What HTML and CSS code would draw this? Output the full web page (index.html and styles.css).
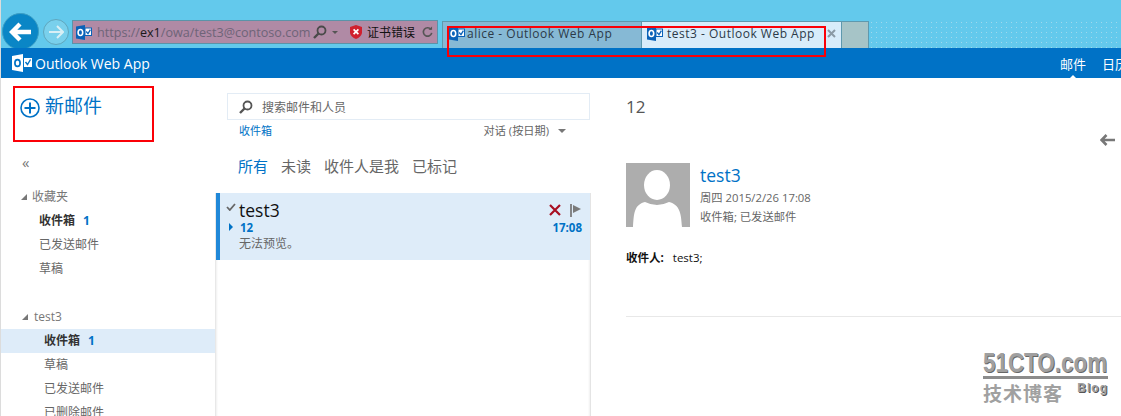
FILE: index.html
```html
<!DOCTYPE html>
<html lang="zh-CN">
<head>
<meta charset="utf-8">
<title>test3 - Outlook Web App</title>
<link rel="stylesheet" href="styles.css">
</head>
<body>
<svg class="defs" width="0" height="0" aria-hidden="true">
  <symbol id="ol" viewBox="0 0 16 15">
    <path d="M0 1.5 L9 0 V15 L0 13.5Z" fill="#0a62b8"/>
    <ellipse cx="4.4" cy="7.5" rx="2.3" ry="3" fill="none" stroke="#fff" stroke-width="1.6"/>
    <rect x="9" y="3" width="6.5" height="7.5" fill="#fff" stroke="#0a62b8"/>
    <path d="M10.2 6.5 L12 8.6 L14.4 4.6" fill="none" stroke="#0a62b8" stroke-width="1.3"/>
  </symbol>
  <symbol id="mag" viewBox="0 0 14 14">
    <circle cx="8.5" cy="5.5" r="4" fill="none" stroke="currentColor" stroke-width="1.8"/>
    <path d="M5.5 8.5 L1 13" stroke="currentColor" stroke-width="2.4"/>
  </symbol>
</svg>

<header class="chrome">
  <div class="nav-btns">
    <div class="back"><svg width="24" height="20" viewBox="0 0 24 20"><path d="M11 2 L3 10 L11 18 M3 10 H22" fill="none" stroke="#fff" stroke-width="4.4"/></svg></div>
    <div class="forward"><svg width="16" height="14" viewBox="0 0 16 14"><path d="M9 1 L15 7 L9 13 M15 7 H1" fill="none" stroke="#d8eff5" stroke-width="2"/></svg></div>
  </div>
  <div class="address">
    <svg class="ol-icon" width="16" height="15"><use href="#ol"/></svg>
    <span class="url">https://<b>ex1</b>/owa/test3@contoso.com</span>
    <svg class="addr-mag" width="14" height="14"><use href="#mag"/></svg>
    <span class="addr-caret"></span>
    <svg class="shield" width="12" height="14" viewBox="0 0 12 14"><path d="M6 0 L12 2 V8 Q11 12 6 14 Q1 12 0 8 V2Z" fill="#d01f2e"/><path d="M3.6 4.4 L8.4 9.2 M8.4 4.4 L3.6 9.2" stroke="#fff" stroke-width="1.7"/></svg>
    <span class="cert">证书错误</span>
    <svg class="reload" width="11" height="12" viewBox="0 0 12 12"><path d="M9.8 3.2 A4.6 4.6 0 1 0 10.6 7" fill="none" stroke="#555" stroke-width="1.8"/><path d="M7 3.6 H11 V0Z" fill="#555"/></svg>
  </div>
  <div class="tabs">
    <div class="tab tab-off"><svg width="16" height="15"><use href="#ol"/></svg><span>alice - Outlook Web App</span></div>
    <div class="tab tab-on"><svg width="16" height="15"><use href="#ol"/></svg><span>test3 - Outlook Web App</span><svg class="tab-x" width="9" height="9" viewBox="0 0 9 9"><path d="M1 1 L8 8 M8 1 L1 8" stroke="#8b9aa5" stroke-width="2"/></svg></div>
    <div class="tab-new"></div>
  </div>
  <div class="dots"></div>
</header>

<div class="suite">
  <div class="brand">
    <svg width="20" height="18" viewBox="0 0 20 18"><path d="M0 2 L11 0 V18 L0 16Z" fill="#fff"/><ellipse cx="5.5" cy="9" rx="2.6" ry="3.4" fill="none" stroke="#0072c6" stroke-width="1.7"/><rect x="12" y="4" width="8" height="9" fill="#fff"/><path d="M13.5 8 L15.5 10.5 L18.5 5.5" fill="none" stroke="#0072c6" stroke-width="1.4"/></svg>
    <span>Outlook Web App</span>
  </div>
  <nav class="suite-nav">
    <span class="suite-link current">邮件</span>
    <span class="suite-link">日历</span>
  </nav>
</div>

<main class="app">
  <aside class="left">
    <div class="new-mail">
      <svg width="20" height="20" viewBox="0 0 20 20"><circle cx="10" cy="10" r="9" fill="none" stroke="#0072c6" stroke-width="1.6"/><path d="M10 4.5 V15.5 M4.5 10 H15.5" stroke="#0072c6" stroke-width="2"/></svg>
      <span>新邮件</span>
    </div>
    <div class="collapse">«</div>
    <section class="group fav">
      <div class="group-head"><span class="tri"></span>收藏夹</div>
      <div class="item strong">收件箱<em>1</em></div>
      <div class="item">已发送邮件</div>
      <div class="item">草稿</div>
    </section>
    <section class="group acct">
      <div class="group-head"><span class="tri"></span>test3</div>
      <div class="item strong selected">收件箱<em>1</em></div>
      <div class="item">草稿</div>
      <div class="item">已发送邮件</div>
      <div class="item">已删除邮件</div>
    </section>
  </aside>

  <section class="list">
    <div class="search">
      <svg width="14" height="14"><use href="#mag"/></svg>
      <span>搜索邮件和人员</span>
    </div>
    <div class="list-meta">
      <span class="folder">收件箱</span>
      <span class="sort">对话 (按日期)<i class="sort-caret"></i></span>
    </div>
    <div class="filters">
      <span class="active">所有</span><span>未读</span><span>收件人是我</span><span>已标记</span>
    </div>
    <div class="messages">
      <article class="msg">
        <svg class="check" width="10" height="8" viewBox="0 0 10 8"><path d="M1 4 L3.8 7 L9 1" fill="none" stroke="#666" stroke-width="1.8"/></svg>
        <div class="msg-body">
          <div class="msg-row"><span class="sender">test3</span>
            <span class="msg-actions">
              <svg width="12" height="12" viewBox="0 0 12 12"><path d="M1 1 L11 11 M11 1 L1 11" stroke="#a80f22" stroke-width="2.2"/></svg>
              <svg width="11" height="13" viewBox="0 0 11 13"><path d="M1 0 V13" stroke="#7a7a7a" stroke-width="1.8"/><path d="M3 1 L11 5 L3 9Z" fill="#7a7a7a"/></svg>
            </span>
          </div>
          <div class="msg-row subject"><span class="subj"><i class="expand"></i>12</span><span>17:08</span></div>
          <div class="preview">无法预览。</div>
        </div>
      </article>
    </div>
  </section>

  <section class="read">
    <h1 class="subject-title">12</h1>
    <div class="reply-arrow"><svg width="15" height="12" viewBox="0 0 15 12"><path d="M6.5 1 L1.5 6 L6.5 11 M2 6 H15" fill="none" stroke="#777" stroke-width="2.6"/></svg></div>
    <div class="sender-card">
      <svg class="avatar" width="64" height="64" viewBox="0 0 64 64"><rect width="64" height="64" fill="#adadad"/><ellipse cx="31" cy="22" rx="13" ry="15" fill="#fff"/><path d="M7 64 C8 50 8 42 19 39 Q31 45 43 39 C54 42 55 50 56 64Z" fill="#fff"/></svg>
      <div class="sender-info">
        <div class="sender-name">test3</div>
        <div class="sender-line">周四 2015/2/26 17:08</div>
        <div class="sender-line">收件箱; 已发送邮件</div>
      </div>
    </div>
    <div class="recipients"><b>收件人:</b><span>test3;</span></div>
    <hr class="rule">
  </section>
</main>

<div class="callout callout-tabs"></div>
<div class="callout callout-new"></div>

<div class="watermark">
  <div class="wm-top"><span class="wm-logo">51CTO.com</span></div>
  <div class="wm-bottom"><span class="wm-cn">技术博客</span><span class="wm-blog">Blog</span></div>
</div>
</body>
</html>
```
FILE: styles.css
```css
* { box-sizing: border-box; }
html, body { margin: 0; padding: 0; }
body {
  width: 1121px; height: 416px; overflow: hidden; position: relative;
  background: #fff; color: #666;
  font-family: "Open Sans", "Noto Sans", "Noto Sans CJK SC", sans-serif;
  border-left: 1px solid #dcdcdc;
}
.defs { position: absolute; }

/* browser chrome */
.chrome {
  height: 48px; background: #63c9ec; display: flex; align-items: flex-end;
  margin-left: -1px; padding-left: 2px; overflow: hidden;
}
.nav-btns { display: flex; align-items: center; height: 37px; margin-bottom: -2px; }
.back {
  width: 37px; height: 37px; border-radius: 50%; background: #0a86c6; border: 1px solid #3a9dc4;
  display: flex; align-items: center; justify-content: center;
}
.forward {
  width: 26px; height: 26px; border-radius: 50%; border: 1px solid #5fa6bd; margin-left: 4px;
  background: #79d0ec; display: flex; align-items: center; justify-content: center;
}
.address {
  width: 366px; height: 24px; margin: 0 0 4px 3px; background: #b08aa5; border: 1px solid #5b93a8;
  display: flex; align-items: center; padding-left: 3px; font-size: 12.6px; color: #6e6478;
}
.ol-icon { flex: none; }
.url { margin-left: 5px; width: 213px; flex: none; white-space: nowrap; }
.url b { font-weight: 400; color: #1a1a1a; }
.addr-mag { color: #4a4a4a; margin-left: 3px; flex: none; }
.addr-caret { width: 0; height: 0; border: 3.5px solid transparent; border-top-color: #555; border-bottom: 0; margin-left: 5px; }
.shield { margin-left: 12px; flex: none; }
.cert { color: #111; font-size: 12px; margin-left: 5px; width: 49px; flex: none; white-space: nowrap; }
.reload { margin-left: 6px; flex: none; }

.tabs { display: flex; height: 27px; margin-left: 4px; }
.tab {
  width: 199px; display: flex; align-items: center; padding: 0 0 3px 6px;
  font-size: 12px; color: #2c3a48; border: 1px solid #5e99ae; border-bottom: 0; white-space: nowrap;
}
.tab span { margin-left: 2px; letter-spacing: .5px; }
.tab-off { background: #86b9d5; border-right: 0; }
.tab-on { background: #d8ecfa; padding-left: 5px; width: 201px; }
.tab-on span { margin-left: 4px; }
.tab-x { margin-left: 12px; }
.tab-new { width: 27px; background: #a6c4c7; border: 1px solid #5e99ae; border-bottom: 0; border-left: 0; }
.dots {
  flex: 1; height: 28px;
  background-image: radial-gradient(circle, #a0d8ec 0.6px, transparent 0.8px);
  background-size: 5px 5px;
}

/* suite bar */
.suite {
  height: 30px; background: #0072c6; color: #fff; display: flex; align-items: center;
  justify-content: space-between; margin-left: -1px; padding-left: 12px;
}
.brand { display: flex; align-items: center; font-size: 14px; }
.brand span { margin-left: 3px; }
.suite-nav { display: flex; gap: 16px; margin-right: -7px; font-size: 13px; }
.suite-link { position: relative; white-space: nowrap; }
.current::after {
  content: ""; position: absolute; left: 9px; bottom: -6px; border: 4px solid transparent;
  border-top: 0; border-bottom-color: #fff;
}

/* three columns */
.app { display: flex; height: 338px; overflow: hidden; }

.left { width: 214px; flex: none; }
.new-mail { display: flex; align-items: center; padding: 4px 0 0 19px; height: 56px; color: #0072c6; font-size: 19px; line-height: 20px; }
.new-mail span { margin-left: 5px; margin-top: -4px; }
.collapse { font-size: 15px; line-height: 14px; color: #777; padding-left: 21px; margin-top: 21px; }
.group { font-size: 12px; line-height: 24px; color: #666; }
.fav { margin-top: 16px; }
.acct { margin-top: 24px; }
.group-head { height: 24px; display: flex; align-items: center; padding-left: 20px; color: #777; }
.tri { width: 0; height: 0; margin-right: 5px; border-style: solid; border-width: 0 0 6px 6px; border-color: transparent transparent #777 transparent; }
.acct .group-head { padding-left: 21px; }
.acct .tri { margin-right: 6px; }
.item { height: 24px; padding-left: 38px; white-space: nowrap; }
.acct .item { padding-left: 43px; }
.strong { font-weight: 700; color: #333; }
.strong em { font-style: normal; color: #0072c6; margin-left: 8px; }
.selected { background: #deecf9; }

.list { width: 376px; flex: none; display: flex; flex-direction: column; }
.search {
  margin: 15px 0 0 12px; width: 363px; height: 27px; flex: none; border: 1px solid #e3ecf5; color: #666;
  display: flex; align-items: center; padding-left: 11px; font-size: 12px;
}
.search svg { color: #555; }
.search span { margin-left: 9px; }
.list-meta { display: flex; justify-content: space-between; padding: 3px 25px 0 24px; font-size: 11px; line-height: 15px; height: 18px; flex: none; }
.folder { color: #0072c6; }
.sort { display: flex; align-items: center; font-size: 11.2px; }
.sort-caret { width: 0; height: 0; margin-left: 9px; border: 4px solid transparent; border-top-color: #777; border-bottom: 0; }
.filters { display: flex; gap: 13px; padding: 18px 0 0 23px; font-size: 15px; line-height: 20px; height: 55px; flex: none; color: #666; }
.active { color: #0072c6; }
.messages { flex: 1; border-left: 1px solid #e8e8e8; border-right: 1px solid #e4e4e4; box-shadow: inset 2px 0 2px -1px #f0f0f0, inset -2px 0 2px -1px #f0f0f0; }
.msg {
  height: 67px; background: #deecf9; border-left: 4px solid #2088d8; display: flex;
  padding: 7px 8px 0 6px;
}
.check { flex: none; margin-top: 3px; }
.msg-body { flex: 1; margin-left: 3px; }
.msg-row { display: flex; justify-content: space-between; }
.sender { font-size: 17.5px; line-height: 20px; color: #111; }
.msg-actions { display: flex; gap: 9px; padding: 4px 1px 0 0; }
.subject { font-size: 11.5px; line-height: 14px; font-weight: 700; color: #0072c6; margin-top: 1px; }
.expand { display: inline-block; width: 0; height: 0; margin: 0 7px 1px -10px; border-style: solid; border-width: 4px 0 4px 4px; border-color: transparent transparent transparent #0072c6; }
.preview { font-size: 12px; line-height: 18px; color: #666; }

.read { flex: 1; min-width: 0; padding: 18px 0 0 35px; position: relative; }
.subject-title { margin: 0; font-size: 17px; font-weight: 400; line-height: 22px; color: #555; }
.reply-arrow { height: 17px; margin: 11px 0 0 474px; }
.sender-card { display: flex; margin-top: 17px; }
.avatar { flex: none; }
.sender-info { margin-left: 10px; }
.sender-name { font-size: 17.5px; line-height: 25px; color: #0072c6; }
.sender-line { font-size: 11.3px; line-height: 19px; color: #666; white-space: nowrap; }
.recipients { display: flex; margin-top: 22px; font-size: 11.5px; line-height: 18px; color: #111; }
.recipients b { margin-right: 9px; }
.rule { margin: 49px 0 0; border: 0; border-top: 1px solid #e8e8e8; }

/* annotation overlays */
.callout { position: absolute; border: 2px solid #fb0007; }
.callout-tabs { left: 446px; top: 26px; width: 379px; height: 31px; }
.callout-new { left: 12px; top: 86px; width: 141px; height: 56px; }

.watermark { position: absolute; left: 982px; top: 349px; width: 125px; color: #a0a0a0; }
.wm-top { height: 30px; border-bottom: 3px solid #8c8c8c; white-space: nowrap; }
.wm-logo {
  display: inline-block; transform: scaleX(.8); transform-origin: left top;
  font-family: "Liberation Sans", sans-serif; font-weight: 700; font-size: 28px; line-height: 27px;
  text-shadow: 1px 1px 0 #666;
}
.wm-bottom { display: flex; justify-content: space-between; margin-top: 3px; }
.wm-cn { font-size: 19px; line-height: 22px; font-weight: 700; letter-spacing: 1px; font-family: "Noto Sans CJK SC", sans-serif; }
.wm-blog { font-family: "Liberation Sans", sans-serif; font-size: 12px; line-height: 12px; font-weight: 700; letter-spacing: 1px; text-shadow: 1px 1px 0 #555; }
```
